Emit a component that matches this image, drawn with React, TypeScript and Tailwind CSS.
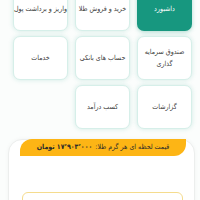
const items = [
  { label: 'داشبورد', active: true },
  { label: 'خرید و فروش طلا' },
  { label: 'واریز و برداشت پول' },
  { label: 'صندوق سرمایه گذاری', wrap: true },
  { label: 'حساب های بانکی' },
  { label: 'خدمات' },
  { label: 'گزارشات' },
  { label: 'کسب درآمد' },
]

function Tile({ label, active, wrap }: { label: string; active?: boolean; wrap?: boolean }) {
  return (
    <div
      className={
        active
          ? 'flex h-[44px] items-center justify-center rounded-[7px] bg-[#17977f] text-center text-white shadow-[0_1px_4px_rgba(23,151,127,0.35)]'
          : 'flex h-[44px] items-center justify-center rounded-[7px] border border-[#d6efe9] bg-white text-center text-[#3a3a3a] shadow-[0_0_5px_rgba(23,151,127,0.18)]'
      }
    >
      <span
        className={
          wrap
            ? 'w-[44px] text-[7px] leading-[12px]'
            : 'whitespace-nowrap text-[7px] leading-[12px] tracking-[-0.1px]'
        }
      >
        {label}
      </span>
    </div>
  )
}

export default function App() {
  return (
    <div
      dir="rtl"
      className="h-[200px] w-[200px] overflow-hidden bg-[#fbfdfc]"
      style={{ fontFamily: '"DejaVu Sans Condensed", "DejaVu Sans", sans-serif' }}
    >
      <div className="-mt-[13px] grid grid-cols-[55px_55px_55px] gap-x-[7px] gap-y-[5px] pr-[8px]">
        {items.map((it) => (
          <Tile key={it.label} label={it.label} active={it.active} wrap={it.wrap} />
        ))}
      </div>

      <div className="mt-[10px] ml-[8px] mr-[5px] h-[80px] rounded-t-[14px] border border-[#eceeed] bg-white shadow-[0_0_4px_rgba(0,0,0,0.04)]">
        <div className="-mt-px mr-[8px] ml-[11px] flex h-[17px] items-center justify-center whitespace-nowrap rounded-tl-[12px] rounded-br-[12px] bg-[#fdb515] text-[7px] text-[#2a2a2a]">
          <span>قیمت لحظه ای هر گرم طلا:</span>
          <span className="mr-[3px] font-bold">۱۷٬۹۰۳٬۰۰۰ تومان</span>
        </div>
        <div className="mt-[36px] mr-[11px] ml-[13px] h-[40px] rounded-[6px] border border-[#f5dc8e] bg-white" />
      </div>
    </div>
  )
}
